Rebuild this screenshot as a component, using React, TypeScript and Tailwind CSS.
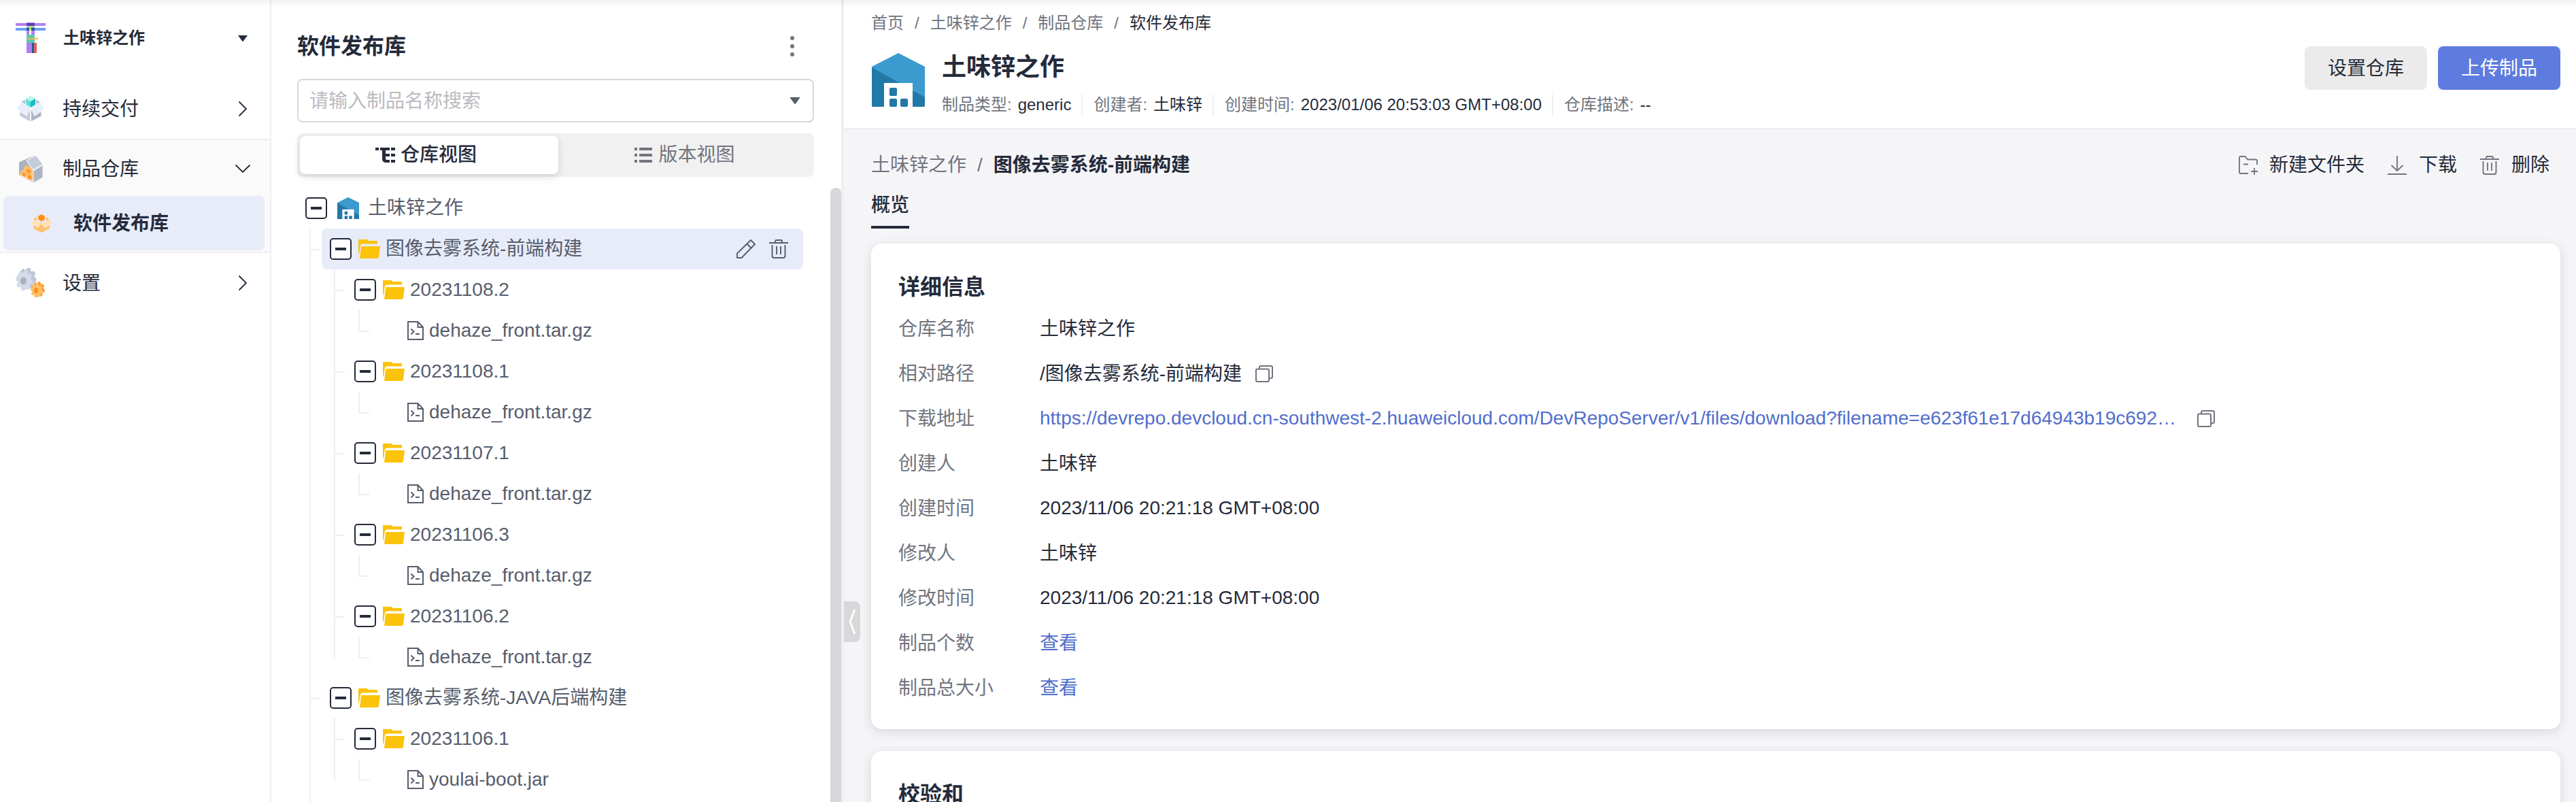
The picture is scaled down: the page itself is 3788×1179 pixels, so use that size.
import type { ReactNode } from 'react';

const hair = 'fill-none stroke-current';

function ProjectLogo() {
  return (
    <svg className="h-[46px] w-[46px] shrink-0" viewBox="0 0 46 46" shapeRendering="crispEdges">
      <rect x="17" y="0" width="12" height="45" fill="#b07ff5" />
      <rect x="1" y="1" width="44" height="4" fill="#b07ff5" />
      <rect x="17" y="5" width="12" height="2" fill="#b5e08c" />
      <rect x="1" y="8" width="44" height="4" fill="#6a9ff5" />
      <rect x="17" y="1" width="12" height="4" fill="#5a3db8" />
      <rect x="17" y="8" width="12" height="4" fill="#2a5a9c" />
      <rect x="21" y="7" width="3" height="5" fill="#b5e86c" />
      <rect x="21" y="12" width="3" height="6" fill="#fff" />
      <rect x="17" y="18" width="12" height="12" fill="#5ccaa8" />
      <rect x="18" y="23" width="16" height="2" fill="#f0b95a" />
      <rect x="25" y="30" width="3" height="15" fill="#255a94" />
      <rect x="28" y="30" width="4" height="15" fill="#e06464" />
    </svg>
  );
}

function DeliveryIcon() {
  return (
    <svg className="h-[38px] w-[40px] shrink-0" viewBox="0 0 40 38">
      <path d="M6 9l7-4h14l7 4-14 8.500z" fill="#b5bdca" />
      <path d="M4.500 20 19.500 17v20.500l-15-8z" fill="#c3cad8" />
      <path d="M35.500 20 20.500 17v20.500l15-8z" fill="#adb5c3" />
      <path d="M5.500 8.500 20 17l-5.500 12.500L0 20z" fill="#e8eefb" stroke="#fff" strokeWidth=".6" />
      <path d="M34.500 8.500 20 17l5.500 12.500L40 20z" fill="#e8eefb" stroke="#fff" strokeWidth=".6" />
      <path d="M20 17v20.500" stroke="#fff" strokeWidth="1.500" />
      <path d="M20 0l7 4v9l-7 4-7-4V4z" fill="#fff" stroke="#fff" strokeWidth="2" />
      <path d="M13 4l7-4 7 4-7 4z" fill="#b8f5ee" />
      <path d="M13 4l7 4v9l-7-4z" fill="#5fe0da" />
      <path d="M27 4l-7 4v9l7-4z" fill="#16bfc2" />
    </svg>
  );
}

function WarehouseIcon() {
  return (
    <svg className="h-[41px] w-[35px] shrink-0" viewBox="0 0 35 41">
      <path d="M0 10.500 24 0 11 8l9.500 15v18L0 29z" fill="#aab2c0" />
      <path d="M0 29l6-3 14.500 11v4z" fill="#e6ecfa" />
      <path d="M2 24l5-3V18l5-3 6 4 2.500 5v13L15 36l-5-3v-2L2 30z" fill="#ffbe70" />
      <path d="M11 20l6 2.500v5L11 25zM5 25l4 2v6l-4-3zM13 29l5 2v6l-5-3z" fill="#ff9326" />
      <path d="M11 8 25 .5l10 13L21 22z" fill="#c5ccd9" stroke="#fff" strokeWidth="1" />
      <path d="M21 23l14-8.500V33l-14 8z" fill="#adb5c3" stroke="#fff" strokeWidth=".8" />
    </svg>
  );
}

function ReleaseIcon() {
  return (
    <svg className="h-[27px] w-[30px] shrink-0" viewBox="0 0 30 27">
      <path d="M3 8l5-4.500V10zM27 8l-5-4.500V10z" fill="#ffc069" />
      <path d="M3.500 14 15 12l11.500 2v7L15 27 3.500 21z" fill="#ffc069" />
      <path d="M3.500 7.500 15 13.500l-4.500 7L0 14z" fill="#ffe3b8" />
      <path d="M26.500 7.500 15 13.500l4.500 7L30 14z" fill="#ffe3b8" />
      <path d="M10.200 2.800 15 0l4.800 2.800v5L15 10.500l-4.800-2.700z" fill="#ff8d1a" stroke="#e8ecf9" strokeWidth="2" paintOrder="stroke" />
    </svg>
  );
}

/* Closed outline of a gear with flat-topped teeth. */
function gearPath(cx: number, cy: number, rx: number, ry: number, teeth: number) {
  const pts: string[] = [];
  const step = (Math.PI * 2) / teeth;
  for (let i = 0; i < teeth; i++) {
    for (const [offset, scale] of [[-0.32, 0.8], [-0.2, 1], [0.2, 1], [0.32, 0.8]]) {
      const a = (i + offset) * step - Math.PI / 2 + 0.2;
      pts.push(`${(cx + Math.cos(a) * rx * scale).toFixed(2)} ${(cy + Math.sin(a) * ry * scale).toFixed(2)}`);
    }
  }
  return `M${pts.join('L')}Z`;
}

function GearsIcon() {
  return (
    <svg className="h-[44px] w-[44px] shrink-0" viewBox="0 0 44 44" strokeLinejoin="round">
      <path d={gearPath(17, 15, 13, 15, 8)} fill="#b9c1cf" stroke="#b9c1cf" />
      <path d={gearPath(15, 16.500, 13, 15, 8)} fill="#c4cbd8" stroke="#c4cbd8" />
      <path d={gearPath(12.500, 18.500, 12, 14.500, 8)} fill="#d5dbe7" stroke="#d5dbe7" />
      <ellipse cx="11.500" cy="19" rx="4.500" ry="5.500" fill="#a9b2c1" />
      <path d={gearPath(33, 31.500, 9.500, 11, 8)} fill="#ff9a2e" stroke="#ff9a2e" />
      <path d={gearPath(31, 33, 8.500, 10, 8)} fill="#ffc069" stroke="#ffc069" />
      <ellipse cx="30" cy="33" rx="3" ry="4" fill="#ff8d1a" />
    </svg>
  );
}

function Warehouse({ className }: { className: string }) {
  return (
    <svg className={className} viewBox="0 0 78 79" preserveAspectRatio="none">
      <path d="M0 20 39 0l39 20v57q0 2-2 2H2q-2 0-2-2z" fill="#3b9ace" />
      <path d="M0 21l78 44v12q0 2-2 2H2q-2 0-2-2z" fill="#2278a6" />
      <path d="M18 44h42v35H18z" fill="#fff" />
      <rect x="26" y="51" width="11" height="12" rx="2" fill="#2278a6" />
      <rect x="26" y="67" width="11" height="12" rx="2" fill="#2278a6" />
      <rect x="42" y="67" width="11" height="12" rx="2" fill="#2278a6" />
    </svg>
  );
}

function Folder() {
  return (
    <svg className="h-[28px] w-8 shrink-0" viewBox="0 0 32 28">
      <path d="M0 0h13l1.500 2H28v4.500H6q-2.500 0-3 2.500L1 22 0 21z" fill="#fcc30b" />
      <path d="M5.500 10H32l-2 16q-.3 2-2 2H2L4 12q.2-2 1.500-2z" fill="#fcc30b" />
    </svg>
  );
}

function ScriptFile() {
  return (
    <svg className={`${hair} h-[28px] w-6 shrink-0`} viewBox="0 0 24 28" strokeWidth="2">
      <path d="M1 1h14.500L23 9v18H1zM15.500 1v8H23M5.500 11.500l4 4-4 4M12 19h6" />
    </svg>
  );
}

function Trash() {
  return (
    <svg className={`${hair} h-[28px] w-[28px] shrink-0`} viewBox="0 0 28 28" strokeWidth="1.900">
      <path d="M0 5h28M9 5V2.500Q9 1 10.500 1h7Q19 1 19 2.500V5M4.500 8v16q0 3 3 3h13q3 0 3-3V8M11 10v12M17 10v12" />
    </svg>
  );
}

function Pencil() {
  return (
    <svg className={`${hair} h-[28px] w-[28px] shrink-0`} viewBox="0 0 28 28" strokeWidth="1.900" strokeLinejoin="round">
      <path d="M1 27v-6.500L21 1l6 6L7.500 27zM15.500 6.500l6 6" />
    </svg>
  );
}

function Copy() {
  return (
    <svg className={`${hair} h-[25px] w-[26px] shrink-0 text-[#71757f]`} viewBox="0 0 26 25" strokeWidth="2">
      <rect x="1" y="5.500" width="19" height="18.500" rx="2" />
      <path d="M6 5V3q0-2 2-2h15q2 0 2 2v14q0 2-2 2h-2" />
    </svg>
  );
}

function Chevron({ down }: { down?: boolean }) {
  return (
    <svg className={`${hair} h-6 w-6 ${down ? 'rotate-90' : ''}`} viewBox="0 0 24 24" strokeWidth="1.800">
      <path d="M6.500 1.500 17 12 6.500 22.500" />
    </svg>
  );
}

function Caret({ className }: { className: string }) {
  return (
    <svg className={className} viewBox="0 0 14 9">
      <path d="M0 0h14L7.800 8.500q-.8.800-1.600 0z" fill="currentColor" />
    </svg>
  );
}

function NavItem({ icon, label, down, className }: { icon: ReactNode; label: string; down?: boolean; className: string }) {
  return (
    <div className={`flex items-center pr-7 ${className}`}>
      <span className="flex w-[92px] justify-center pr-0.5">{icon}</span>
      <span className="flex-1 pt-0.5 text-[28px]">{label}</span>
      <Chevron down={down} />
    </div>
  );
}

function Sidebar() {
  return (
    <nav className="w-[399px] shrink-0 border-r-2 border-[#eeeef4]">
      <div className="flex h-28 items-center pr-[33px]">
        <span className="flex w-[93px] justify-center pr-[3px]"><ProjectLogo /></span>
        <span className="flex-1 text-[24px] font-bold">土味锌之作</span>
        <Caret className="h-[9px] w-[14px]" />
      </div>
      <NavItem icon={<DeliveryIcon />} label="持续交付" className="mt-1 h-[88px]" />
      <div className="border-y-2 border-[#eeeef4] bg-[#fafafa] pb-0.5">
        <NavItem icon={<WarehouseIcon />} label="制品仓库" down className="h-[82px] pt-0.5" />
        <div className="mr-2 ml-[5px] flex h-20 items-center rounded-lg bg-[#e8ecf9]">
          <span className="flex w-[103px] justify-center pl-[9px]"><ReleaseIcon /></span>
          <span className="pt-px text-[28px] font-bold">软件发布库</span>
        </div>
      </div>
      <NavItem icon={<GearsIcon />} label="设置" className="h-[88px]" />
    </nav>
  );
}

type TreeRow = { kind: 'folder' | 'file'; label: string; last?: boolean };

const rows: TreeRow[] = [
  { kind: 'folder', label: '20231108.2' },
  { kind: 'file', label: 'dehaze_front.tar.gz' },
  { kind: 'folder', label: '20231108.1' },
  { kind: 'file', label: 'dehaze_front.tar.gz' },
  { kind: 'folder', label: '20231107.1' },
  { kind: 'file', label: 'dehaze_front.tar.gz' },
  { kind: 'folder', label: '20231106.3' },
  { kind: 'file', label: 'dehaze_front.tar.gz' },
  { kind: 'folder', label: '20231106.2' },
  { kind: 'file', label: 'dehaze_front.tar.gz', last: true },
];

const backendRows: TreeRow[] = [
  { kind: 'folder', label: '20231106.1' },
  { kind: 'file', label: 'youlai-boot.jar', last: true },
];

function Toggle() {
  return (
    <span className="flex size-8 shrink-0 items-center justify-center rounded-[5px] border-2 border-[#252b3a] bg-white">
      <span className="h-1 w-4 bg-[#252b3a]" />
    </span>
  );
}

/* Vertical guide line of one tree level with an optional branch tick. */
function Guide({ tick, short }: { tick?: boolean; short?: boolean }) {
  return (
    <span className="flex h-[60px] w-9 shrink-0">
      <span className={`w-0.5 bg-[#eeeef4] ${short ? 'h-8' : 'h-[60px]'}`} />
      {tick && <span className="mt-[30px] h-0.5 w-[14px] bg-[#eeeef4]" />}
    </span>
  );
}

function Rows({ items }: { items: TreeRow[] }) {
  return (
    <>
      {items.map((r, i) => (
        <div key={i} className="flex h-[60px] items-center pl-[18px]">
          <Guide />
          <Guide tick={r.kind === 'folder'} short={r.last} />
          {r.kind === 'folder' ? (
            <div className="-ml-[6px] flex items-center">
              <Toggle />
              <span className="ml-[10px]"><Folder /></span>
              <span className="ml-2">{r.label}</span>
            </div>
          ) : (
            <>
              <Guide tick short />
              <span className="ml-9"><ScriptFile /></span>
              <span className="ml-2">{r.label}</span>
            </>
          )}
        </div>
      ))}
    </>
  );
}

function RepoPanel() {
  return (
    <section className="flex w-[842px] shrink-0 flex-col border-r-4 border-[#eeeef4] pl-[38px]">
      <div className="mr-10 flex h-[116px] shrink-0 items-center justify-between pt-5 pr-[29px]">
        <h2 className="text-[32px] leading-[48px] font-bold">软件发布库</h2>
        <span className="flex flex-col gap-[6px]">
          <i className="size-[6px] rounded-full bg-[#71757f]" />
          <i className="size-[6px] rounded-full bg-[#71757f]" />
          <i className="size-[6px] rounded-full bg-[#71757f]" />
        </span>
      </div>
      <div className="mr-10 flex h-16 shrink-0 items-center justify-between rounded-lg border-2 border-[#d7d8da] pr-[18px] pl-4 text-[28px] text-[#babbc0]">
        <span className="pt-0.5">请输入制品名称搜索</span>
        <Caret className="h-[10px] w-4 text-[#575d6c]" />
      </div>
      <div className="mt-4 mr-10 flex h-16 shrink-0 rounded-lg bg-[#f1f1f1] p-1 text-[28px]">
        <div className="flex w-[380px] items-center justify-center gap-2 rounded-lg bg-white pr-[9px] font-medium shadow-[0_4px_12px_rgba(37,43,58,0.16)]">
          <svg className="h-6 w-[29px]" viewBox="0 0 29 24" fill="currentColor">
            <path d="M0 1h5v4H0zM7 1h14v4h-6v5h6v4h-6v3q0 2 2 2h4v4h-5q-6 0-6-6V5H7zM23 1h6v4h-6zM23 10h6v4h-6zM23 19h6v4h-6z" />
          </svg>
          <span>仓库视图</span>
        </div>
        <div className="flex flex-1 items-center justify-center gap-[9px] text-[#71757f]">
          <svg className="h-6 w-[26px]" viewBox="0 0 26 24" fill="currentColor">
            <path d="M0 1h4v4H0zM7 1h19v4H7zM0 10h4v4H0zM7 10h19v4H7zM0 19h4v4H0zM7 19h19v4H7z" />
          </svg>
          <span>版本视图</span>
        </div>
      </div>
      <div className="mt-4 flex min-h-0 flex-1 text-[28px] text-[#575d6c]">
        <div className="min-w-0 flex-1">
          <div className="flex h-[60px] items-center pl-3">
            <Toggle />
            <Warehouse className="mr-[13px] ml-[15px] size-8" />
            <span>土味锌之作</span>
          </div>
          <div className="flex h-[60px] items-center pl-[18px]">
            <Guide tick />
            <div className="mr-10 -ml-[18px] flex h-[60px] flex-1 items-center rounded-lg bg-[#e8ecf9] pr-[22px] pl-3">
              <Toggle />
              <span className="ml-[10px]"><Folder /></span>
              <span className="ml-2 flex-1">图像去雾系统-前端构建</span>
              <span className="flex gap-5"><Pencil /><Trash /></span>
            </div>
          </div>
          <Rows items={rows} />
          <div className="flex h-[60px] items-center pl-[18px]">
            <Guide tick />
            <span className="-ml-[6px]"><Toggle /></span>
            <span className="ml-[10px]"><Folder /></span>
            <span className="ml-2">图像去雾系统-JAVA后端构建</span>
          </div>
          <Rows items={backendRows} />
          <div className="h-8 pl-[18px]"><Guide /></div>
        </div>
        <div className="w-4 shrink-0 rounded-t-lg bg-[#d7d8da]" />
      </div>
    </section>
  );
}

function Meta({ label, value, last }: { label: string; value: string; last?: boolean }) {
  return (
    <span className={`flex h-[30px] items-center gap-[9px] ${last ? '' : 'mr-4 border-r-2 border-[#eeeef4] pr-[15px]'}`}>
      <span className="text-[#71757f]">{label}:</span>
      {value}
    </span>
  );
}

const details: { label: string; value: string; copy?: string; linked?: boolean }[] = [
  { label: '仓库名称', value: '土味锌之作' },
  { label: '相对路径', value: '/图像去雾系统-前端构建', copy: 'ml-5' },
  {
    label: '下载地址',
    value: 'https://devrepo.devcloud.cn-southwest-2.huaweicloud.com/DevRepoServer/v1/files/download?filename=e623f61e17d64943b19c692…',
    copy: 'ml-[31px]',
    linked: true,
  },
  { label: '创建人', value: '土味锌' },
  { label: '创建时间', value: '2023/11/06 20:21:18 GMT+08:00' },
  { label: '修改人', value: '土味锌' },
  { label: '修改时间', value: '2023/11/06 20:21:18 GMT+08:00' },
  { label: '制品个数', value: '查看', linked: true },
  { label: '制品总大小', value: '查看', linked: true },
];

/* Latin-only values sit on the row's centre; Chinese ones one pixel lower. */
const isLatin = (s: string) => /^[\x20-\x7e…]+$/.test(s);

function Main() {
  return (
    <main className="relative flex min-w-0 flex-1 flex-col bg-[#f5f5f8]">
      <header className="h-[190px] shrink-0 border-b-2 border-[#eeeef2] bg-white pr-[23px] pl-10">
        <div className="flex h-[66px] items-center gap-4 pt-0.5 text-[24px] text-[#71757f]">
          <span>首页</span><span>/</span><span>土味锌之作</span><span>/</span><span>制品仓库</span><span>/</span>
          <span className="text-[#252b3a]">软件发布库</span>
        </div>
        <div className="flex">
          <Warehouse className="mt-3 ml-px h-[79px] w-[78px]" />
          <div className="ml-[25px] flex-1">
            <h1 className="h-16 text-[36px] leading-[66px] font-bold">土味锌之作</h1>
            <div className="mt-[9px] flex text-[24px]">
              <Meta label="制品类型" value="generic" />
              <Meta label="创建者" value="土味锌" />
              <Meta label="创建时间" value="2023/01/06 20:53:03 GMT+08:00" />
              <Meta label="仓库描述" value="--" last />
            </div>
          </div>
          <div className="mt-0.5 flex gap-4 text-[28px]">
            <button className="h-16 w-[180px] rounded-lg bg-[#ebebeb] pt-0.5">设置仓库</button>
            <button className="h-16 w-[180px] rounded-lg bg-[#5e7ce0] pt-0.5 text-white">上传制品</button>
          </div>
        </div>
      </header>

      <div className="flex h-[104px] shrink-0 items-center gap-4 pt-0.5 pr-[39px] pl-10 text-[28px]">
        <span className="text-[#71757f]">土味锌之作</span>
        <span className="text-[#71757f]">/</span>
        <span className="flex-1 font-bold">图像去雾系统-前端构建</span>
        <span className="flex items-center gap-[17px]">
          <svg className={`${hair} h-[28px] w-[28px] text-[#71757f]`} viewBox="0 0 28 28" strokeWidth="1.900">
            <path d="M14 26H3q-2 0-2-2V3q0-2 2-2h6.500l3.500 4.500h12q2 0 2 2V13M7 12.500h7M23 18v10M18 23h10" />
          </svg>
          新建文件夹
        </span>
        <span className="ml-[18px] flex items-center gap-[18px]">
          <svg className={`${hair} h-[28px] w-[28px] text-[#71757f]`} viewBox="0 0 28 28" strokeWidth="1.900">
            <path d="M0 27h28M14 0v21.500M5.500 14 14 22l8.500-8" />
          </svg>
          下载
        </span>
        <span className="ml-[18px] flex items-center gap-[18px]">
          <span className="text-[#71757f]"><Trash /></span>
          删除
        </span>
      </div>

      <div className="ml-10 h-[42px] w-14 shrink-0 border-b-4 border-[#252b3a] text-[28px] leading-[16px] font-medium">概览</div>

      <div className="mt-[22px] mr-[23px] ml-10 h-[714px] shrink-0 rounded-2xl bg-white pt-[42px] pl-10 text-[28px] shadow-[0_4px_16px_rgba(37,43,58,0.14)]">
        <h3 className="h-[50px] text-[32px] leading-[45px] font-bold">详细信息</h3>
        {details.map((d) => (
          <div key={d.label} className="flex h-[66px] items-center">
            <span className="w-[208px] pt-0.5 text-[#71757f]">{d.label}</span>
            <span className={`${d.linked ? 'text-[#526ecc]' : ''} ${isLatin(d.value) ? '' : 'pt-0.5'}`}>{d.value}</span>
            {d.copy && <span className={`flex ${d.copy}`}><Copy /></span>}
          </div>
        ))}
      </div>

      <div className="mt-8 mr-[23px] ml-10 h-[200px] shrink-0 rounded-2xl bg-white pt-[42px] pl-10 shadow-[0_4px_16px_rgba(37,43,58,0.14)]">
        <h3 className="text-[32px] leading-[45px] font-bold">校验和</h3>
      </div>

      <div className="absolute top-[884px] left-0 flex h-[60px] w-6 items-center justify-center rounded-r-lg bg-[#d7d8da] text-white">
        <svg className={`${hair} h-[38px] w-[10px]`} viewBox="0 0 10 38" strokeWidth="3">
          <path d="M9 1 2 19l7 18" />
        </svg>
      </div>
    </main>
  );
}

export default function App() {
  return (
    <div className="relative flex h-[1179px] w-[3788px] overflow-hidden bg-white font-['Liberation_Sans','Noto_Sans_CJK_SC',sans-serif] leading-normal text-[#252b3a]">
      <Sidebar />
      <RepoPanel />
      <Main />
      <div className="pointer-events-none absolute inset-x-0 top-0 h-3 bg-gradient-to-b from-black/5 to-transparent" />
    </div>
  );
}
